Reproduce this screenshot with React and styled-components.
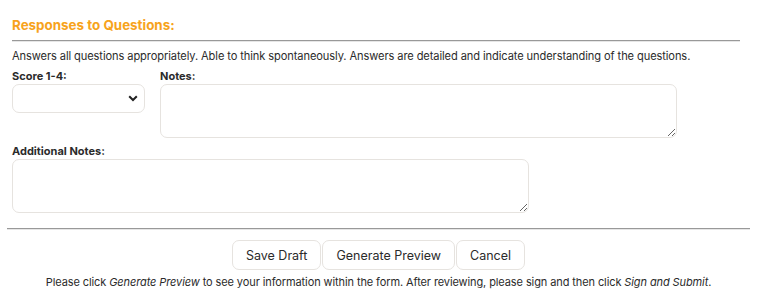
import React from "react";
import styled, { createGlobalStyle } from "styled-components";

const Global = createGlobalStyle`
  html, body { margin: 0; padding: 0; background: #fff; }
  body { font-family: Inter, "Noto Sans", sans-serif; color: #2b2b2b; }
  * { box-sizing: border-box; }
`;

const Page = styled.div`
  width: 764px;
  padding: 0 14px 0 7px;
`;

const Section = styled.section`
  padding: 16px 10px 0 5px;
`;

const Title = styled.h3`
  margin: 0;
  font-size: 13.4px;
  font-weight: 700;
  color: #f7a31c;
  line-height: 18px;
`;

const Rule = styled.hr`
  margin: ${(p) => p.$m || "6px 0 0"};
  border: 0;
  border-top: 1px solid #999;
  border-bottom: 1px solid #e6e6e6;
  height: 0;
`;

const Desc = styled.p`
  margin: 7px 0 0;
  font-size: 11.1px;
  line-height: 14px;
  letter-spacing: -0.1px;
`;

const Row = styled.div`
  display: flex;
  gap: 15px;
  margin-top: ${(p) => p.$mt || "6px"};
`;

const Field = styled.div`
  display: flex;
  flex-direction: column;
  gap: 1px;
`;

const Label = styled.label`
  font-size: 11px;
  font-weight: 700;
  line-height: 14px;
  color: #2b2b2b;
`;

const SelectWrap = styled.div`
  position: relative;
  width: 133px;
  height: 29px;
`;

const Select = styled.select`
  appearance: none;
  width: 100%;
  height: 100%;
  border: 1px solid #e6e3df;
  border-radius: 7px;
  background: #fff;
  font-family: inherit;
`;

const Chevron = styled.svg`
  position: absolute;
  right: 7px;
  top: 11px;
  pointer-events: none;
`;

const TextArea = styled.textarea`
  width: ${(p) => p.$w}px;
  height: 54px;
  border: 1px solid #e6e3df;
  border-radius: 7px;
  background: #fff;
  resize: both;
  font-family: inherit;
  display: block;
`;

const Buttons = styled.div`
  display: flex;
  justify-content: center;
  gap: 1px;
  margin-top: 10px;
`;

const Button = styled.button`
  height: 30px;
  padding: 0 13px;
  border: 1px solid #e6e3df;
  border-radius: 7px;
  background: #fff;
  font-family: inherit;
  font-size: 12.5px;
  color: #2b2b2b;
  cursor: pointer;
`;

const Footer = styled.p`
  margin: 5px 0 0;
  text-align: center;
  font-size: 11px;
  line-height: 14px;
  letter-spacing: -0.1px;
  em { font-style: italic; }
`;

export default function App() {
  return (
    <Page>
      <Global />
      <Section>
        <Title>Responses to Questions:</Title>
        <Rule />
        <Desc>
          Answers all questions appropriately. Able to think spontaneously. Answers are detailed and indicate understanding of the questions.
        </Desc>
        <Row>
          <Field>
            <Label>Score 1-4:</Label>
            <SelectWrap>
              <Select defaultValue="">
                <option value=""></option>
                <option>1</option>
                <option>2</option>
                <option>3</option>
                <option>4</option>
              </Select>
              <Chevron width="10" height="7" viewBox="0 0 10 7">
                <path d="M1.2 1.2 L5 5 L8.8 1.2" fill="none" stroke="#222" strokeWidth="2" />
              </Chevron>
            </SelectWrap>
          </Field>
          <Field>
            <Label>Notes:</Label>
            <TextArea $w={517} />
          </Field>
        </Row>
        <Row $mt="6px">
          <Field>
            <Label>Additional Notes:</Label>
            <TextArea $w={517} />
          </Field>
        </Row>
      </Section>
      <Rule $m="15px 0 0" />
      <Buttons>
        <Button>Save Draft</Button>
        <Button>Generate Preview</Button>
        <Button>Cancel</Button>
      </Buttons>
      <Footer>
        Please click <em>Generate Preview</em> to see your information within the form. After reviewing, please sign and then click <em>Sign and Submit</em>.
      </Footer>
    </Page>
  );
}
